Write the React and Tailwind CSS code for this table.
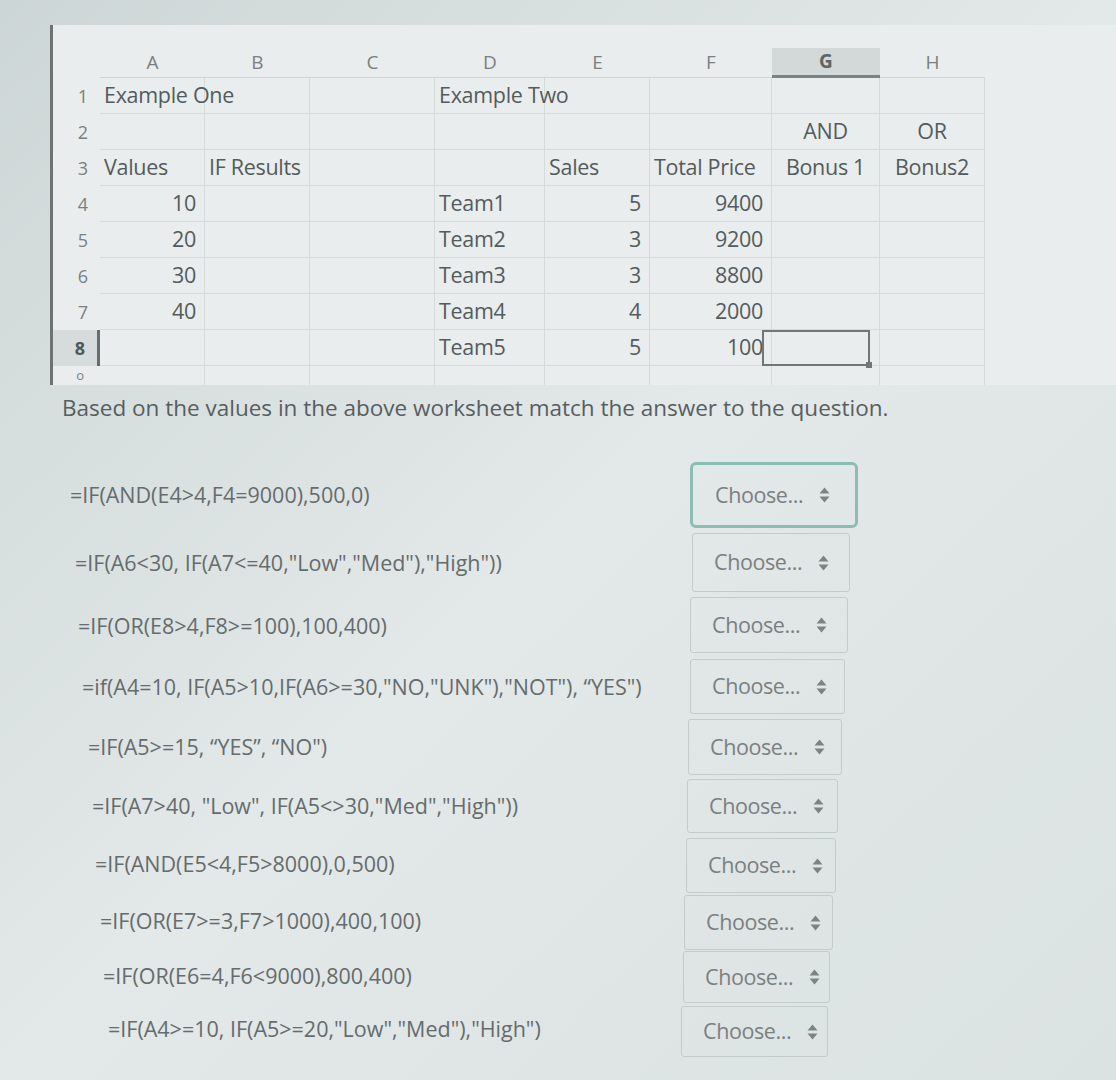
const cols = [
  { key: 'A', w: 'w-[105px]' },
  { key: 'B', w: 'w-[105px]' },
  { key: 'C', w: 'w-[125px]' },
  { key: 'D', w: 'w-[110px]' },
  { key: 'E', w: 'w-[105px]' },
  { key: 'F', w: 'w-[122px]' },
  { key: 'G', w: 'w-[108px]' },
  { key: 'H', w: 'w-[105px]' },
]

// cell contents per row: [text, align]
const rows = [
  { n: '1', cells: { A: ['Example One', 'l'], D: ['Example Two', 'l'] } },
  { n: '2', cells: { G: ['AND', 'c'], H: ['OR', 'c'] } },
  { n: '3', cells: { A: ['Values', 'l'], B: ['IF Results', 'l'], E: ['Sales', 'l'], F: ['Total Price', 'l'], G: ['Bonus 1', 'c'], H: ['Bonus2', 'c'] } },
  { n: '4', cells: { A: ['10', 'r'], D: ['Team1', 'l'], E: ['5', 'r'], F: ['9400', 'r'] } },
  { n: '5', cells: { A: ['20', 'r'], D: ['Team2', 'l'], E: ['3', 'r'], F: ['9200', 'r'] } },
  { n: '6', cells: { A: ['30', 'r'], D: ['Team3', 'l'], E: ['3', 'r'], F: ['8800', 'r'] } },
  { n: '7', cells: { A: ['40', 'r'], D: ['Team4', 'l'], E: ['4', 'r'], F: ['2000', 'r'] } },
  { n: '8', cells: { D: ['Team5', 'l'], E: ['5', 'r'], F: ['100', 'r'] } },
]

const alignCls = { l: 'justify-start pl-[4px]', r: 'justify-end pr-[8px]', c: 'justify-center' }

const questions = [
  { f: '=IF(AND(E4>4,F4=9000),500,0)', fw: 'w-[690px] pl-[70px]', h: 'h-[71px]', sel: 'w-[168px] h-[66px]', focus: true },
  { f: '=IF(A6<30, IF(A7<=40,"Low","Med"),"High"))', fw: 'w-[692px] pl-[75px]', h: 'h-[64px]', sel: 'w-[158px] h-[59px]' },
  { f: '=IF(OR(E8>4,F8>=100),100,400)', fw: 'w-[690px] pl-[78px]', h: 'h-[62px]', sel: 'w-[158px] h-[56px]' },
  { f: '=if(A4=10, IF(A5>10,IF(A6>=30,"NO,"UNK"),"NOT"), \u201CYES")', fw: 'w-[690px] pl-[82px]', h: 'h-[60px]', sel: 'w-[155px] h-[55px]' },
  { f: '=IF(A5>=15, \u201CYES\u201D, \u201CNO")', fw: 'w-[688px] pl-[88px]', h: 'h-[60px]', sel: 'w-[154px] h-[56px]' },
  { f: '=IF(A7>40, "Low", IF(A5<>30,"Med","High"))', fw: 'w-[687px] pl-[92px]', h: 'h-[59px]', sel: 'w-[151px] h-[54px]' },
  { f: '=IF(AND(E5<4,F5>8000),0,500)', fw: 'w-[686px] pl-[95px]', h: 'h-[57px]', sel: 'w-[150px] h-[55px]' },
  { f: '=IF(OR(E7>=3,F7>1000),400,100)', fw: 'w-[684px] pl-[100px]', h: 'h-[56px]', sel: 'w-[149px] h-[55px]' },
  { f: '=IF(OR(E6=4,F6<9000),800,400)', fw: 'w-[683px] pl-[103px]', h: 'h-[55px]', sel: 'w-[147px] h-[52px]' },
  { f: '=IF(A4>=10, IF(A5>=20,"Low","Med"),"High")', fw: 'w-[681px] pl-[108px]', h: 'h-[51px]', sel: 'w-[147px] h-[51px]' },
]

function Arrows() {
  return (
    <svg width="11" height="16" viewBox="0 0 11 16" className="shrink-0">
      <path d="M5.5 0.5 L10.5 6.5 H0.5 Z" fill="#7d8383" />
      <path d="M5.5 15.5 L10.5 9.5 H0.5 Z" fill="#7d8383" />
    </svg>
  )
}

function Sheet() {
  return (
    <div className="pl-[50px] pt-[25px]">
      <div className="border-l-[3px] border-[#6d7273] h-[360px] overflow-hidden bg-[#e9eded]">
        {/* column headers */}
        <div className="flex h-[53px] items-end">
          <div className="w-[47px]" />
          {cols.map((c) => (
            <div
              key={c.key}
              className={`${c.w} h-[30px] flex items-center justify-center text-[19px] ${
                c.key === 'G'
                  ? 'bg-[#d3d9d9] border-b-[3px] border-[#7b8282] text-[#5d6566] font-bold'
                  : 'text-[#7a8081] border-b border-[#cfd6d6]'
              }`}
            >
              {c.key}
            </div>
          ))}
        </div>
        {rows.map((r) => (
          <div key={r.n} className="flex h-[36px]">
            <div
              className={`w-[47px] flex items-center justify-end pr-[12px] text-[18px] ${
                r.n === '8' ? 'bg-[#d6dcdc] text-[#4f5758] font-bold border-r-[3px] border-[#666d6e]' : 'text-[#7a8081]'
              }`}
            >
              {r.n}
            </div>
            {cols.map((c) => {
              const cell = r.cells[c.key]
              const selected = r.n === '8' && c.key === 'G'
              return (
                <div
                  key={c.key}
                  className={`${c.w} relative flex items-center whitespace-nowrap text-[21.5px] tracking-[-0.3px] text-[#545b5c] border-r border-b border-[#d5dbdb] ${
                    cell ? alignCls[cell[1]] : ''
                  }`}
                >
                  {cell ? cell[0] : null}
                  {selected && (
                    <div className="absolute -left-[10px] top-0 w-[108px] h-[36px] border-2 border-[#707877]">
                      <div className="absolute -right-[4px] -bottom-[4px] w-[6px] h-[6px] bg-[#707877]" />
                    </div>
                  )}
                </div>
              )
            })}
          </div>
        ))}
        <div className="flex h-[20px]">
          <div className="w-[47px] flex items-start justify-end pr-[16px] text-[13px] text-[#7a8081]">o</div>
          {cols.map((c) => (
            <div key={c.key} className={`${c.w} border-r border-[#d5dbdb]`} />
          ))}
        </div>
      </div>
    </div>
  )
}

export default function App() {
  return (
    <div
      className="w-[1116px] h-[1080px] overflow-hidden bg-linear-to-br from-[#cdd6d6] via-[#e3e8e8] to-[#dbe2e2] text-[#5b6263]"
      style={{ fontFamily: '"Open Sans", "Noto Sans", sans-serif' }}
    >
      <Sheet />
      <p className="pl-[62px] pt-[6px] h-[77px] text-[22.5px] text-[#575e5f] whitespace-nowrap">
        Based on the values in the above worksheet match the answer to the question.
      </p>
      <div className="flex flex-col">
        {questions.map((q, i) => (
          <div key={i} className={`flex items-start ${q.h}`}>
            <div className={`${q.fw} shrink-0 flex items-center h-full pb-[4px] whitespace-nowrap text-[21.5px] text-[#656c6d]`}>
              {q.f}
            </div>
            <div
              className={`${q.sel} shrink-0 flex items-center gap-[16px] pl-[21px] text-[21.5px] text-[#7a8081] ${
                q.focus ? 'border-[3px] border-[#8cbdb4] rounded-md pl-[22px]' : 'border border-[#c4cbcb] rounded-[3px]'
              }`}
            >
              <span className="tracking-[-0.4px]">Choose...</span>
              <Arrows />
            </div>
          </div>
        ))}
      </div>
    </div>
  )
}
